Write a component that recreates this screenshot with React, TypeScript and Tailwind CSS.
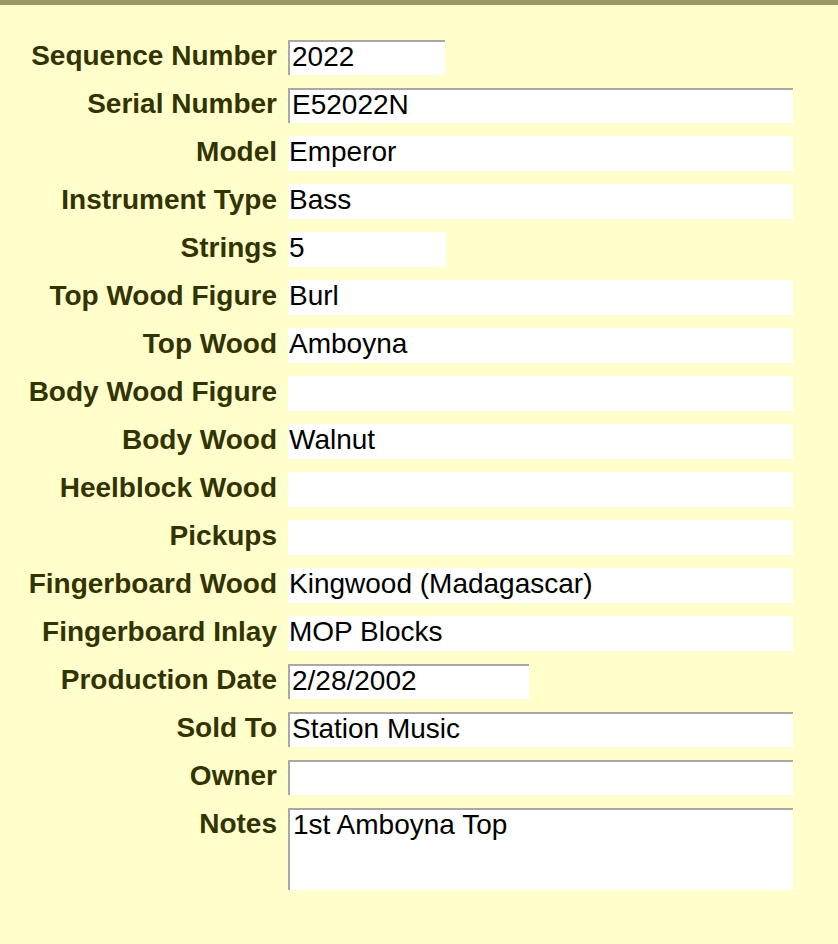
import React from 'react';

type Field = {
  label: string;
  value: string;
  kind: 'plain' | 'input' | 'notes';
  width?: string;
};

const fields: Field[] = [
  { label: 'Sequence Number', value: '2022', kind: 'input', width: 'w-[157px]' },
  { label: 'Serial Number', value: 'E52022N', kind: 'input' },
  { label: 'Model', value: 'Emperor', kind: 'plain' },
  { label: 'Instrument Type', value: 'Bass', kind: 'plain' },
  { label: 'Strings', value: '5', kind: 'plain', width: 'w-[158px]' },
  { label: 'Top Wood Figure', value: 'Burl', kind: 'plain' },
  { label: 'Top Wood', value: 'Amboyna', kind: 'plain' },
  { label: 'Body Wood Figure', value: '', kind: 'plain' },
  { label: 'Body Wood', value: 'Walnut', kind: 'plain' },
  { label: 'Heelblock Wood', value: '', kind: 'plain' },
  { label: 'Pickups', value: '', kind: 'plain' },
  { label: 'Fingerboard Wood', value: 'Kingwood (Madagascar)', kind: 'plain' },
  { label: 'Fingerboard Inlay', value: 'MOP Blocks', kind: 'plain' },
  { label: 'Production Date', value: '2/28/2002', kind: 'input', width: 'w-[241px]' },
  { label: 'Sold To', value: 'Station Music', kind: 'input' },
  { label: 'Owner', value: '', kind: 'input' },
  { label: 'Notes', value: '1st Amboyna Top', kind: 'notes' },
];

const ValueBox: React.FC<{ field: Field }> = ({ field }) => {
  const width = field.width ?? 'w-[505px]';
  if (field.kind === 'plain') {
    return (
      <div className={`${width} h-[35px] bg-white pl-[1px] leading-[32px] text-black whitespace-nowrap overflow-hidden`}>
        {field.value}
      </div>
    );
  }
  if (field.kind === 'notes') {
    return (
      <div className={`${width} h-[82px] bg-white border-t-2 border-l-2 border-[#a8a8a8] pl-[3px] leading-[30px] text-black`}>
        {field.value}
      </div>
    );
  }
  return (
    <div className={`${width} h-[35px] bg-white border-t-2 border-l-2 border-[#a8a8a8] pl-[2px] leading-[30px] text-black whitespace-nowrap overflow-hidden`}>
      {field.value}
    </div>
  );
};

export default function App() {
  return (
    <div className="min-h-screen bg-[#ffffcc] border-t-[5px] border-[#999966] font-['Liberation_Sans',Arial,sans-serif] text-[28px]">
      <div className="pt-[35px] grid grid-cols-[277px_auto] justify-start gap-x-[11px] gap-y-[13px]">
        {fields.map((f) => (
          <React.Fragment key={f.label}>
            <div className="text-right font-bold text-[#333300] leading-[31px] whitespace-nowrap">{f.label}</div>
            <ValueBox field={f} />
          </React.Fragment>
        ))}
      </div>
    </div>
  );
}
